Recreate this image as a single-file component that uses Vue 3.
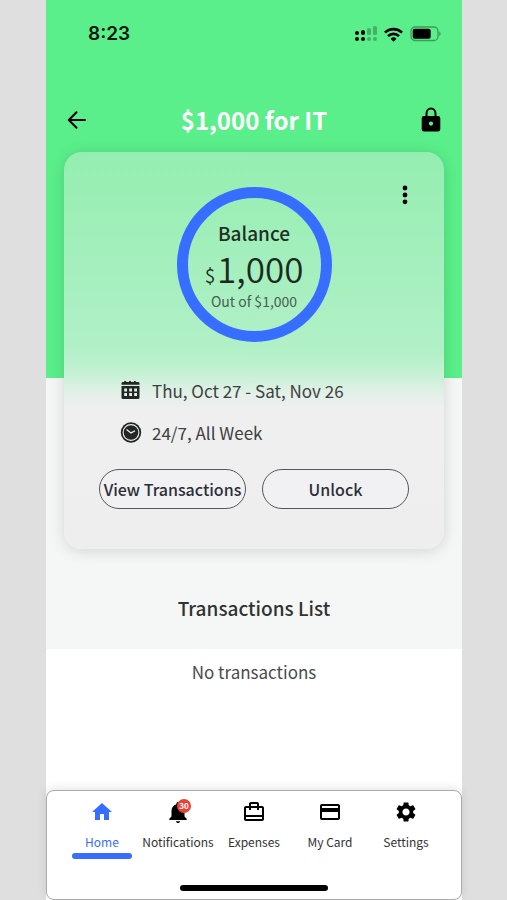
<script setup>
const tabs = [
  { id: 'home', label: 'Home', icon: 'M10 20v-6h4v6h5v-8h3L12 3 2 12h3v8z', active: true },
  {
    id: 'notifications',
    label: 'Notifications',
    icon: 'M12 23c1.100 0 2-.7 2-1.800h-4c0 1.100.9 1.800 2 1.800zm6.500-6.500V11c0-3.300-1.800-6-4.900-6.800V3.600a1.600 1.600 0 0 0-3.200 0v.6C7.300 5 5.500 7.700 5.500 11v5.500l-2.200 2.200v1.300h17.400v-1.300z',
    badge: 30
  },
  {
    id: 'expenses',
    label: 'Expenses',
    icon: 'M20 6h-3V4c0-1.110-.89-2-2-2H9c-1.110 0-2 .89-2 2v2H4c-1.110 0-2 .89-2 2v11c0 1.110.89 2 2 2h16c1.110 0 2-.89 2-2V8c0-1.110-.89-2-2-2zM9 4h6v2H9V4zm11 15H4v-2h16v2zm0-4H4V8h3v2h2V8h6v2h2V8h3v7z'
  },
  {
    id: 'card',
    label: 'My Card',
    icon: 'M20 4H4c-1.110 0-1.990.89-1.990 2L2 18c0 1.110.89 2 2 2h16c1.110 0 2-.89 2-2V6c0-1.110-.89-2-2-2zm0 14H4v-6h16v6zm0-10H4V6h16v2z'
  },
  {
    id: 'settings',
    label: 'Settings',
    icon: 'M19.140 12.940c.04-.3.06-.61.06-.94 0-.32-.02-.64-.07-.94l2.030-1.580c.18-.14.23-.41.12-.61l-1.920-3.320c-.12-.22-.37-.29-.59-.22l-2.390.96c-.5-.38-1.030-.7-1.620-.94l-.36-2.540c-.04-.24-.24-.41-.48-.41h-3.840c-.24 0-.43.17-.47.41l-.36 2.540c-.59.24-1.130.57-1.620.94l-2.390-.96c-.22-.08-.47 0-.59.22L2.740 8.870c-.12.21-.08.47.12.61l2.030 1.580c-.05.3-.09.63-.09.94s.02.64.07.94l-2.030 1.580c-.18.14-.23.41-.12.61l1.920 3.320c.12.22.37.29.59.22l2.390-.96c.5.38 1.030.7 1.620.94l.36 2.540c.05.24.24.41.48.41h3.840c.24 0 .44-.17.47-.41l.36-2.540c.59-.24 1.130-.56 1.620-.94l2.390.96c.22.08.47 0 .59-.22l1.920-3.320c.12-.22.07-.47-.12-.61l-2.010-1.580zM12 15.600c-1.980 0-3.600-1.620-3.600-3.600s1.620-3.600 3.600-3.600 3.600 1.620 3.600 3.600-1.620 3.600-3.600 3.600z'
  }
]
</script>

<template>
  <div class="page">
    <div class="phone">
      <div class="overview">
        <div class="status">
          <span class="time">8:23</span>
          <div class="indicators">
            <svg class="signal" viewBox="0 0 22 16" aria-hidden="true">
              <rect x="0" y="5" width="4" height="4" rx="2" />
              <rect x="0" y="11" width="4" height="4" rx="2" />
              <rect x="6" y="4" width="4" height="5" rx="2" />
              <rect x="6" y="11" width="4" height="4" rx="2" />
              <g opacity=".25">
                <rect x="12" y="2" width="4" height="7" rx="1.500" />
                <rect x="12" y="11" width="4" height="4" rx="2" />
                <rect x="18" y="0" width="4" height="9" rx="1.500" />
                <rect x="18" y="11" width="4" height="4" rx="2" />
              </g>
            </svg>
            <svg class="wifi" viewBox="0 0 18 14" fill="none" stroke="#000" stroke-width="2.500" aria-hidden="true">
              <path d="M.9 5.200a11.600 11.600 0 0 1 16.200 0" />
              <path d="M3.800 8.500a7.500 7.500 0 0 1 10.400 0" />
              <path d="M9 13.800 6.200 11a4.100 4.100 0 0 1 5.600 0z" fill="#000" stroke="none" />
            </svg>
            <svg class="battery" viewBox="0 0 31 16" aria-hidden="true">
              <rect x="1" y="1" width="27" height="13.500" rx="4" fill="none" stroke="#000" stroke-opacity=".35" stroke-width="1.300" />
              <rect x="2.700" y="2.700" width="18" height="10" rx="2" />
              <path d="M29.300 5.500c1.600.5 1.600 4 0 4.500z" opacity=".4" />
            </svg>
          </div>
        </div>

        <header class="header">
          <button class="icon-button" type="button" aria-label="Back">
            <svg class="back" viewBox="0 0 20 20" fill="none" stroke="#000" stroke-width="2" stroke-linecap="round" stroke-linejoin="round">
              <path d="M18 10H2M9.500 2.200 1.800 10l7.700 7.800" />
            </svg>
          </button>
          <h1>$1,000 for IT</h1>
          <button class="icon-button" type="button" aria-label="Lock card">
            <svg class="lock" viewBox="0 0 20 26">
              <path d="M5.500 10V6.500a4.500 5 0 0 1 9 0V10" fill="none" stroke="#000" stroke-width="2" />
              <path fill-rule="evenodd" d="M3 9h14a2.300 2.300 0 0 1 2.300 2.300v11A2.300 2.300 0 0 1 17 24.600H3A2.300 2.300 0 0 1 .7 22.300v-11A2.300 2.300 0 0 1 3 9zm7 5.500a2.100 2.100 0 1 0 0 4.200 2.100 2.100 0 0 0 0-4.200z" />
            </svg>
          </button>
        </header>

        <section class="card">
          <button class="icon-button more" type="button" aria-label="More options">
            <svg viewBox="0 0 6 20">
              <circle cx="3" cy="3" r="2.400" />
              <circle cx="3" cy="10" r="2.400" />
              <circle cx="3" cy="16.800" r="2.400" />
            </svg>
          </button>

          <div class="ring">
            <h2>Balance</h2>
            <p class="amount"><span class="currency">$</span>1,000</p>
            <p class="limit">Out of $1,000</p>
          </div>

          <ul class="rules">
            <li>
              <svg viewBox="0 0 22 22" fill="#222624" aria-hidden="true">
                <path d="M3 2.100h1.200V1h2v1.100h2.800V1h2v1.100h2.800V1h2v1.100H18q1.500 0 1.500 1.300v1.400h-18V3.400Q1.500 2.100 3 2.100z" />
                <path fill-rule="evenodd" d="M1.500 6h18v11.500q0 1.500-1.500 1.500H3q-1.500 0-1.500-1.500zM4.200 8.400v3H7v-3zm5 0v3H12v-3zm5 0v3H17v-3zm-10 4.600v3H7v-3zm5 0v3H12v-3zm5 0v3H17v-3z" />
              </svg>
              <span>Thu, Oct 27 - Sat, Nov 26</span>
            </li>
            <li>
              <svg viewBox="0 0 22 22" aria-hidden="true">
                <circle cx="11" cy="10.500" r="10.200" fill="#222624" />
                <circle cx="11" cy="10.500" r="7.900" fill="none" stroke="#eee" stroke-width="1.100" />
                <path d="m6.500 7.500 4.500 3.400 4-2.200" fill="none" stroke="#eee" stroke-width="1.300" />
              </svg>
              <span>24/7, All Week</span>
            </li>
          </ul>

          <div class="actions">
            <button type="button">View Transactions</button>
            <button type="button">Unlock</button>
          </div>
        </section>

        <h2 class="list-title">Transactions List</h2>
      </div>

      <p class="empty">No transactions</p>

      <nav class="tabs">
        <div class="tab-row">
          <a v-for="tab in tabs" :key="tab.id" href="#" class="tab" :class="{ active: tab.active }">
            <span class="tab-icon">
              <svg viewBox="0 0 24 24" fill="currentColor" aria-hidden="true"><path :d="tab.icon" /></svg>
              <span v-if="tab.badge" class="badge">{{ tab.badge }}</span>
            </span>
            <span class="tab-label">{{ tab.label }}</span>
          </a>
        </div>
        <div class="home-indicator"></div>
      </nav>
    </div>
  </div>
</template>

<style>
body {
  background: #dfdfdf;
}
</style>

<style scoped>
* {
  box-sizing: border-box;
}

.page {
  min-height: 100vh;
  display: flex;
  padding: 0 45px 0 46px;
  font-family: "Noto Sans CJK SC", "Noto Sans", sans-serif;
  color: #303332;
}

.phone {
  flex: 1;
  min-width: 0;
  display: flex;
  flex-direction: column;
  background: #fff;
}

h1,
h2,
p,
ul {
  margin: 0;
  padding: 0;
}

button {
  font-family: inherit;
  cursor: pointer;
}

.overview {
  padding: 24px 18px 24px;
  background: linear-gradient(#5aef8b 378px, #f5f7f7 378px);
}

.status {
  display: flex;
  align-items: center;
  justify-content: space-between;
  height: 20px;
  padding: 0 3px 0 24px;
}

.time {
  font: 600 19px/20px Inter, sans-serif;
  color: #06150b;
}

.indicators {
  display: flex;
  align-items: center;
  gap: 7px;
}

.signal {
  width: 22px;
  height: 16px;
}

.wifi {
  width: 19px;
  height: 15px;
}

.battery {
  width: 31px;
  height: 16px;
}

.header {
  display: flex;
  align-items: center;
  justify-content: space-between;
  height: 40px;
  margin-top: 56px;
}

.header h1 {
  font-size: 24px;
  line-height: 40px;
  font-weight: 700;
  color: #fff;
}

.icon-button {
  display: flex;
  align-items: center;
  justify-content: center;
  width: 26px;
  height: 26px;
  padding: 0;
  border: 0;
  background: none;
}

.back {
  width: 20px;
  height: 20px;
}

.lock {
  width: 20px;
  height: 26px;
}

.card {
  position: relative;
  display: flex;
  flex-direction: column;
  align-items: center;
  margin-top: 12px;
  padding: 35px 35px 40px;
  border-radius: 18px;
  background: linear-gradient(#95eeb1 0, #a5efbe 120px, #b2f0c8 200px, #c6f1d5 222px, #e4f0e8 242px, #efefef 256px, #eee 100%);
  box-shadow: 0 2px 16px rgba(0, 0, 0, 0.14);
}

.more {
  position: absolute;
  top: 30px;
  right: 26px;
}

.more svg {
  width: 6px;
  height: 20px;
}

.ring {
  display: flex;
  flex-direction: column;
  align-items: center;
  width: 155px;
  height: 155px;
  padding-top: 20px;
  border: 11px solid #386eff;
  border-radius: 50%;
}

.ring h2 {
  font-size: 19px;
  line-height: 30px;
  font-weight: 500;
  color: #1f2f24;
}

.amount {
  font-size: 35px;
  line-height: 40px;
  font-weight: 350;
  color: #1c2b20;
}

.currency {
  margin-right: 2px;
  font-size: 19px;
}

.limit {
  margin-top: -4px;
  font-size: 14px;
  line-height: 20px;
  color: #47604f;
}

.rules {
  align-self: stretch;
  display: grid;
  gap: 14px;
  margin-top: 35px;
  padding-left: 21px;
  list-style: none;
}

.rules li {
  display: flex;
  align-items: center;
  gap: 10px;
  font-size: 17px;
  line-height: 28px;
  color: #3c423f;
}

.rules svg {
  width: 22px;
  height: 22px;
}

.actions {
  align-self: stretch;
  display: grid;
  grid-template-columns: 1fr 1fr;
  gap: 16px;
  margin-top: 22px;
}

.actions button {
  height: 40px;
  padding: 0;
  border: 1px solid #55575a;
  border-radius: 20px;
  background: #f1f1f3;
  font-size: 16px;
  font-weight: 500;
  color: #2c2e36;
  white-space: nowrap;
}

.list-title {
  margin-top: 43px;
  margin-bottom: 1px;
  font-size: 19px;
  line-height: 32px;
  font-weight: 500;
  text-align: center;
}

.empty {
  flex: 1;
  padding: 9px 18px;
  font-size: 17px;
  line-height: 28px;
  text-align: center;
  color: #4a4a4a;
}

.tabs {
  display: flex;
  flex-direction: column;
  align-items: center;
  gap: 26px;
  padding: 9px 17px 8px;
  border: 1px solid #aaa;
  border-radius: 8px;
  background: #fff;
  box-shadow: 0 -2px 10px rgba(0, 0, 0, 0.1);
}

.tab-row {
  align-self: stretch;
  display: grid;
  grid-template-columns: repeat(5, 1fr);
}

.tab {
  display: flex;
  flex-direction: column;
  align-items: center;
  color: #000;
  text-decoration: none;
}

.tab-icon {
  position: relative;
  display: flex;
}

.tab-icon svg {
  width: 24px;
  height: 24px;
}

.tab-label {
  margin-top: 8px;
  font-size: 12px;
  line-height: 20px;
  color: #333;
  white-space: nowrap;
}

.tab::after {
  content: "";
  width: 60px;
  height: 6px;
  margin-top: 1px;
  border-radius: 3px;
}

.tab.active,
.tab.active .tab-label {
  color: #386eff;
}

.tab.active::after {
  background: #386eff;
}

.badge {
  position: absolute;
  top: -1px;
  right: -1px;
  width: 14px;
  height: 14px;
  border-radius: 50%;
  background: #ee4136;
  font-size: 8px;
  line-height: 14px;
  font-weight: 700;
  text-align: center;
  color: #fff;
}

.home-indicator {
  width: 148px;
  height: 6px;
  border-radius: 3px;
  background: #000;
}
</style>
